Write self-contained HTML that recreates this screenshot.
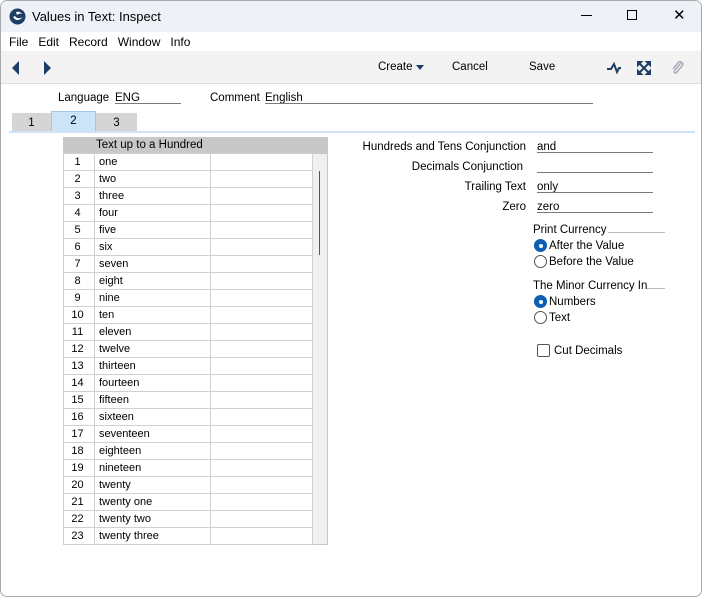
<!DOCTYPE html>
<html><head><meta charset="utf-8"><style>
*{margin:0;padding:0;box-sizing:border-box}
body{width:702px;height:597px;background:#fff;font-family:"Liberation Sans",sans-serif;font-size:11.5px;color:#000;position:relative;overflow:hidden}
.win{position:absolute;left:0;top:0;width:702px;height:597px;border:1px solid #a9a9a9;border-radius:7px;overflow:hidden;background:#fff}
.a{position:absolute;white-space:nowrap}
.title{left:0;top:0;width:702px;height:31px;background:#eef2f8}
.tool{left:0;top:50px;width:702px;height:33px;background:#f3f3f3;border-bottom:1px solid #dedede}
.ul{position:absolute;border-bottom:1px solid #7a7a7a;height:1px}
table{border-collapse:collapse;position:absolute;left:62px;top:136px;font-size:11px;background:#fff}
td{height:17px;border:1px solid #d0d0d0;padding:0 0 0 4px;line-height:15px;background:#fff}
td.n{width:31px;text-align:center;padding:0 3px 0 0}
td.t{width:116px}
td.e{width:102px}
.radio{position:absolute;width:13px;height:13px;border-radius:50%;border:1px solid #555;background:#fff}
.radio.on{background:#0a5fb4;border-color:#0a5fb4}
.radio.on::after{content:"";position:absolute;left:3.5px;top:3.5px;width:4px;height:4px;border-radius:50%;background:#fff}
</style></head><body><div class="win">
<div class="a title"></div>
<svg class="a" style="left:8px;top:7px" width="17" height="17" viewBox="0 0 17 17"><circle cx="8.5" cy="8.5" r="8" fill="#1e3e66"/><path d="M4 9 Q8 15 14 9 Q9 12 6 8Z" fill="#fff"/><path d="M7 4 Q11 3 13 6 Q10 5 8 7Z" fill="#fff"/></svg>
<div class="a" style="left:31px;top:8px;font-size:13px">Values in Text: Inspect</div>
<div class="a" style="left:580px;top:14px;width:11px;height:1px;background:#000"></div>
<div class="a" style="left:626px;top:9px;width:10px;height:10px;border:1px solid #000"></div>
<div class="a" style="left:672px;top:5px;font-size:15px">✕</div>
<div class="a" style="left:8px;top:34px;font-size:12px">File&nbsp;&nbsp;&nbsp;Edit&nbsp;&nbsp;&nbsp;Record&nbsp;&nbsp;&nbsp;Window&nbsp;&nbsp;&nbsp;Info</div>
<div class="a tool"></div>
<svg class="a" style="left:11px;top:60px" width="40" height="14"><path d="M7 0 L0 7 L7 14Z M32 0 L39 7 L32 14Z" fill="#1e3e66"/></svg>
<div class="a" style="left:377px;top:60px">Create</div>
<svg class="a" style="left:415px;top:64px" width="8" height="5"><path d="M0 0H8L4 5Z" fill="#1e3e66"/></svg>
<div class="a" style="left:451px;top:60px">Cancel</div>
<div class="a" style="left:528px;top:60px">Save</div>
<svg class="a" style="left:605px;top:60px" width="16" height="14"><path d="M1 8 L5 8 L8 3 L11 11 L13 7 L15 7" stroke="#1e3e66" stroke-width="2" fill="none"/></svg>
<svg class="a" style="left:636px;top:60px" width="14" height="14"><path d="M0 0H5L0 5Z M14 0H9L14 5Z M0 14H5L0 9Z M14 14H9L14 9Z M3 3L11 11 M11 3L3 11" fill="#1e3e66" stroke="#1e3e66" stroke-width="2"/></svg>
<svg class="a" style="left:669px;top:58px" width="16" height="18"><path d="M11 4 L5 11 Q3 14 6 14 L12 7 Q14 4 11 3 Q9 2 7 5 L3 10" stroke="#aab" stroke-width="1.5" fill="none"/></svg>
<div class="a" style="left:57px;top:91px">Language</div>
<div class="a" style="left:114px;top:91px">ENG</div><div class="ul" style="left:114px;top:102px;width:66px"></div>
<div class="a" style="left:209px;top:91px">Comment</div>
<div class="a" style="left:264px;top:91px">English</div><div class="ul" style="left:264px;top:102px;width:328px"></div>
<div class="a" style="left:11px;top:112px;width:39px;height:18px;background:#d5d5d5;text-align:center;line-height:20px">1</div>
<div class="a" style="left:50px;top:110px;width:45px;height:20px;background:#cce4f7;border:1px solid #9fc7ea;border-bottom:none;text-align:center;line-height:18px">2</div>
<div class="a" style="left:95px;top:112px;width:41px;height:18px;background:#d5d5d5;text-align:center;line-height:20px">3</div>
<div class="a" style="left:8px;top:130px;width:686px;height:2px;background:#cfe3f5"></div>
<div class="a" style="left:62px;top:136px;width:265px;height:408px;background:#f0f0f0;border:1px solid #c8c8c8"></div>
<div class="a" style="left:62px;top:136px;width:265px;height:17px;background:#c8c8c8"></div>
<div class="a" style="left:95px;top:138px">Text up to a Hundred</div>
<table style="top:152px">
<tr><td class="n">1</td><td class="t">one</td><td class="e"></td></tr>
<tr><td class="n">2</td><td class="t">two</td><td class="e"></td></tr>
<tr><td class="n">3</td><td class="t">three</td><td class="e"></td></tr>
<tr><td class="n">4</td><td class="t">four</td><td class="e"></td></tr>
<tr><td class="n">5</td><td class="t">five</td><td class="e"></td></tr>
<tr><td class="n">6</td><td class="t">six</td><td class="e"></td></tr>
<tr><td class="n">7</td><td class="t">seven</td><td class="e"></td></tr>
<tr><td class="n">8</td><td class="t">eight</td><td class="e"></td></tr>
<tr><td class="n">9</td><td class="t">nine</td><td class="e"></td></tr>
<tr><td class="n">10</td><td class="t">ten</td><td class="e"></td></tr>
<tr><td class="n">11</td><td class="t">eleven</td><td class="e"></td></tr>
<tr><td class="n">12</td><td class="t">twelve</td><td class="e"></td></tr>
<tr><td class="n">13</td><td class="t">thirteen</td><td class="e"></td></tr>
<tr><td class="n">14</td><td class="t">fourteen</td><td class="e"></td></tr>
<tr><td class="n">15</td><td class="t">fifteen</td><td class="e"></td></tr>
<tr><td class="n">16</td><td class="t">sixteen</td><td class="e"></td></tr>
<tr><td class="n">17</td><td class="t">seventeen</td><td class="e"></td></tr>
<tr><td class="n">18</td><td class="t">eighteen</td><td class="e"></td></tr>
<tr><td class="n">19</td><td class="t">nineteen</td><td class="e"></td></tr>
<tr><td class="n">20</td><td class="t">twenty</td><td class="e"></td></tr>
<tr><td class="n">21</td><td class="t">twenty one</td><td class="e"></td></tr>
<tr><td class="n">22</td><td class="t">twenty two</td><td class="e"></td></tr>
<tr><td class="n">23</td><td class="t">twenty three</td><td class="e"></td></tr>
</table>
<div class="a" style="left:318px;top:170px;width:1px;height:84px;background:#555"></div>
<div class="a" style="right:175px;top:140px">Hundreds and Tens Conjunction</div>
<div class="a" style="right:178px;top:160px">Decimals Conjunction</div>
<div class="a" style="right:175px;top:180px">Trailing Text</div>
<div class="a" style="right:175px;top:200px">Zero</div>
<div class="a" style="left:536px;top:140px">and</div><div class="ul" style="left:536px;top:151px;width:116px"></div>
<div class="ul" style="left:536px;top:171px;width:116px"></div>
<div class="a" style="left:536px;top:180px">only</div><div class="ul" style="left:536px;top:191px;width:116px"></div>
<div class="a" style="left:536px;top:200px">zero</div><div class="ul" style="left:536px;top:211px;width:116px"></div>
<div class="a" style="left:532px;top:223px">Print Currency</div><div class="a" style="left:607px;top:231px;width:57px;height:1px;background:#bbb"></div>
<div class="radio on" style="left:533px;top:238px"></div><div class="a" style="left:548px;top:239px">After the Value</div>
<div class="radio" style="left:533px;top:254px"></div><div class="a" style="left:548px;top:255px">Before the Value</div>
<div class="a" style="left:532px;top:279px">The Minor Currency In</div><div class="a" style="left:646px;top:287px;width:18px;height:1px;background:#bbb"></div>
<div class="radio on" style="left:533px;top:294px"></div><div class="a" style="left:548px;top:295px">Numbers</div>
<div class="radio" style="left:533px;top:310px"></div><div class="a" style="left:548px;top:311px">Text</div>
<div class="a" style="left:536px;top:343px;width:13px;height:13px;border:1px solid #555;border-radius:2px"></div>
<div class="a" style="left:553px;top:344px">Cut Decimals</div>
</div></body></html>
